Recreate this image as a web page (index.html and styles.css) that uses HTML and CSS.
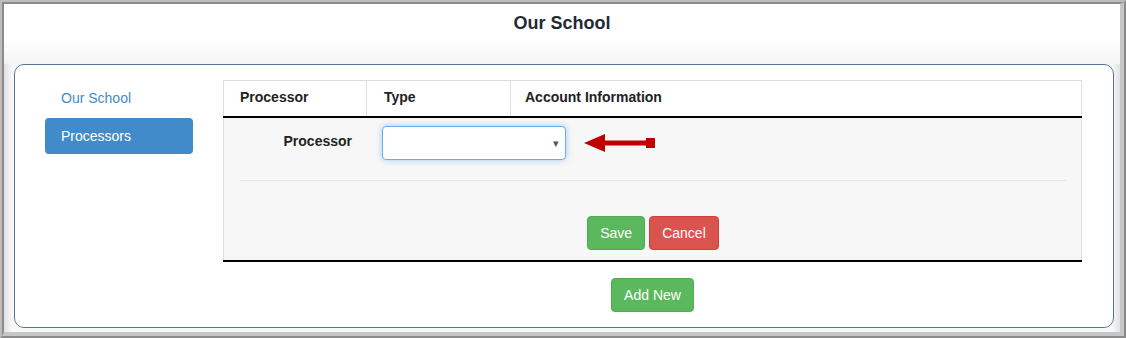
FILE: index.html
```html
<!DOCTYPE html>
<html lang="en">
  <head>
    <meta charset="UTF-8">
    <title>Our School - Processors</title>
    <link rel="stylesheet" href="styles.css">
  </head>
  <body>
    <div class="frame">
      <div class="window">
        <h1 class="title">Our School</h1>

        <div class="panel">
          <ul class="nav">
            <li><a href="#">Our School</a></li>
            <li class="active"><a href="#">Processors</a></li>
          </ul>

          <div class="content">
            <table class="grid">
              <thead>
                <tr>
                  <th class="c1">Processor</th>
                  <th class="c2">Type</th>
                  <th>Account Information</th>
                </tr>
              </thead>
              <tbody>
                <tr>
                  <td colspan="3" class="editor">
                    <div class="form-row">
                      <label class="label">Processor</label>
                      <div class="select"><span class="caret">&#9662;</span></div>
                      <svg class="pointer" width="72" height="20" viewBox="0 0 72 20">
                        <polygon points="0,10 21,1 21,19" fill="#c00000"/>
                        <rect x="19" y="7.5" width="46" height="5" fill="#c00000"/>
                        <rect x="62" y="5" width="9" height="10" fill="#c00000"/>
                      </svg>
                    </div>
                    <hr class="rule">
                    <div class="actions">
                      <button class="btn btn-success">Save</button>
                      <button class="btn btn-danger">Cancel</button>
                    </div>
                  </td>
                </tr>
              </tbody>
            </table>
            <div class="add">
              <button class="btn btn-success">Add New</button>
            </div>
          </div>
        </div>
      </div>
    </div>
  </body>
</html>
```

FILE: styles.css
```css
* { box-sizing: border-box }
html, body { margin: 0; padding: 0 }
body { width: 1126px; height: 338px; overflow: hidden;
  font-family: "Liberation Sans", Arial, sans-serif; font-size: 14px; color: #333 }

.frame { height: 338px; border: 2px solid; border-color: #bdbdbd #8a8a8a #8a8a8a #bdbdbd }
.window { height: 100%; border-style: solid; border-width: 2px 4px 4px 2px;
  border-color: #8c8c8c #c6c6c6 #c6c6c6 #8c8c8c;
  background: linear-gradient(to right, #e2e2e2, #f8f8f8 8px, #f8f8f8 1108px, #e2e2e2) }

.title { margin: 0; height: 60px; padding-top: 9px; text-align: center;
  font-size: 18px; font-weight: bold; color: #1f2a33;
  background: linear-gradient(#fff, #fff 55%, #f4f4f4) }

.panel { display: flex; margin: 0 6px 0 10px; height: 264px; background: #fff;
  border: 1px solid #56779c; border-radius: 10px; padding: 15px 30px 15px 30px }

.nav { list-style: none; margin: 0; padding: 0; width: 148px; flex: none }
.nav li { margin-bottom: 2px }
.nav a { display: block; padding: 8px 16px; line-height: 20px; border-radius: 4px;
  color: #428bca; text-decoration: none }
.nav .active a { background: #428bca; color: #fff }

.content { margin-left: 30px; width: 859px }

.grid { width: 859px; border-collapse: collapse }
.grid th { text-align: left; padding: 6px 15px 9px 14px; line-height: 20px; font-weight: bold;
  color: #222; border: 1px solid #ddd }
.grid .c1 { width: 143px; padding-left: 16px }
.grid .c2 { width: 144px; padding-left: 17px }
.grid tbody tr { border-top: 2px solid #000; border-bottom: 2px solid #000 }
.editor { background: #f7f7f7; border-left: 1px solid #ddd; border-right: 1px solid #ddd;
  padding: 8px 15px 10px 16px }

.form-row { display: flex; align-items: center }
.label { width: 112px; align-self: flex-start; padding-top: 5px; line-height: 20px;
  text-align: right; font-weight: bold; color: #222 }
.select { width: 184px; height: 34px; margin-left: 30px; background: #fff;
  border: 1px solid #66afe9; border-radius: 4px;
  box-shadow: 0 0 6px rgba(102, 175, 233, .6);
  display: flex; align-items: center; justify-content: flex-end; padding-right: 6px }
.caret { font-size: 11px; color: #555 }
.pointer { margin-left: 18px }

.rule { border: 0; border-top: 1px solid #e5e5e5; margin: 20px 0 35px 0 }

.actions { display: flex; justify-content: center; gap: 4px }
.add { display: flex; justify-content: center; margin-top: 16px }

.btn { font-family: inherit; font-size: 14px; line-height: 20px; padding: 6px 12px;
  border: 1px solid transparent; border-radius: 4px; color: #fff; cursor: pointer }
.btn-success { background: #5cb85c; border-color: #4cae4c }
.btn-danger { background: #d9534f; border-color: #d43f3a }
```
